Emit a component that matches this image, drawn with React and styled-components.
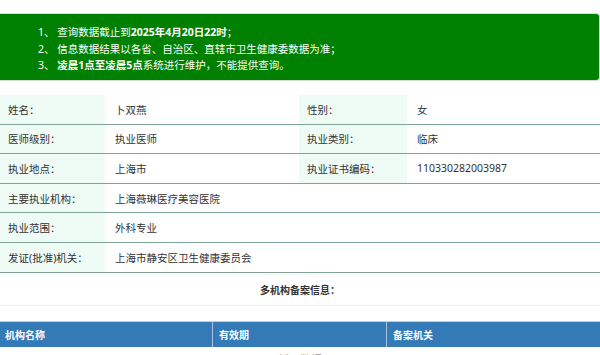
import styled, { createGlobalStyle } from "styled-components";

const GlobalStyle = createGlobalStyle`
  html, body {
    margin: 0;
    padding: 0;
    background: #fff;
  }
  body {
    font-family: "Noto Sans", "Noto Sans CJK SC", sans-serif;
    color: #333;
    overflow: hidden;
  }
`;

const infoRows = [
  { label: "姓名：", value: "卜双燕", label2: "性别：", value2: "女" },
  { label: "医师级别：", value: "执业医师", label2: "执业类别：", value2: "临床" },
  { label: "执业地点：", value: "上海市", label2: "执业证书编码：", value2: "110330282003987" },
  { label: "主要执业机构：", value: "上海薇琳医疗美容医院" },
  { label: "执业范围：", value: "外科专业" },
  { label: "发证(批准)机关：", value: "上海市静安区卫生健康委员会" },
];

function App() {
  return (
    <>
      <GlobalStyle />
      <Page>
        <Notice>
          <NoticeLine>1、 查询数据截止到<b>2025年4月20日22时</b>；</NoticeLine>
          <NoticeLine>2、 信息数据结果以各省、自治区、直辖市卫生健康委数据为准；</NoticeLine>
          <NoticeLine>
            3、 <b>凌晨1点至凌晨5点</b>系统进行维护，不能提供查询。
          </NoticeLine>
        </Notice>

        <InfoGrid>
          {infoRows.map((row) => (
            <Row key={row.label}>
              <LabelCell>{row.label}</LabelCell>
              <ValueCell $wide={!row.label2}>{row.value}</ValueCell>
              {row.label2 && <LabelCell>{row.label2}</LabelCell>}
              {row.label2 && <ValueCell>{row.value2}</ValueCell>}
            </Row>
          ))}
        </InfoGrid>

        <SectionTitle>多机构备案信息：</SectionTitle>

        <OrgTable>
          <HeadRow>
            <HeadCell>机构名称</HeadCell>
            <HeadCell>有效期</HeadCell>
            <HeadCell>备案机关</HeadCell>
          </HeadRow>
          <EmptyRow>暂无数据</EmptyRow>
        </OrgTable>
      </Page>
    </>
  );
}

const Page = styled.div`
  width: 600px;
  padding-top: 13px;
`;

const Notice = styled.div`
  box-sizing: border-box;
  height: 68px;
  background: #008000;
  border: 1px solid #cfe3cf;
  border-left: none;
  border-radius: 0 4px 4px 0;
  padding: 10px 0 0 38px;
  color: #fff;
  font-size: 10.5px;
`;

const NoticeLine = styled.div`
  line-height: 16.5px;
  white-space: nowrap;

  b {
    font-weight: 700;
  }
`;

const InfoGrid = styled.div`
  margin-top: 14px;
  display: flex;
  flex-direction: column;
  font-size: 10.5px;
`;

const Row = styled.div`
  display: grid;
  grid-template-columns: 105px 194px 108px 1fr;
  height: 29.6px;
  box-sizing: border-box;
  border-bottom: 1px solid #7fa595;
`;

const LabelCell = styled.div`
  display: flex;
  align-items: center;
  padding-left: 8px;
  background: #effbf5;
  white-space: nowrap;
`;

const ValueCell = styled.div`
  display: flex;
  align-items: center;
  padding-left: 10px;
  white-space: nowrap;
  grid-column: ${(p) => (p.$wide ? "span 3" : "auto")};
`;

const SectionTitle = styled.div`
  height: 32px;
  line-height: 34px;
  text-align: center;
  font-size: 10px;
  font-weight: 700;
  color: #333;
  border-bottom: 1px solid #eee;
`;

const OrgTable = styled.div`
  margin-top: 15px;
  font-size: 10px;
`;

const HeadRow = styled.div`
  display: grid;
  grid-template-columns: 212px 174px 1fr;
  height: 26px;
  background: #337ab7;
  border-top: 1px solid #b9cfe4;
  box-sizing: border-box;
`;

const HeadCell = styled.div`
  display: flex;
  align-items: center;
  padding-left: 6px;
  color: #fff;
  font-weight: 700;
  border-left: 1px solid #a8c4de;

  &:first-child {
    border-left: none;
    padding-left: 5px;
  }
`;

const EmptyRow = styled.div`
  padding-top: 4px;
  text-align: center;
  color: #999;
  font-size: 11px;
`;

export default App;
